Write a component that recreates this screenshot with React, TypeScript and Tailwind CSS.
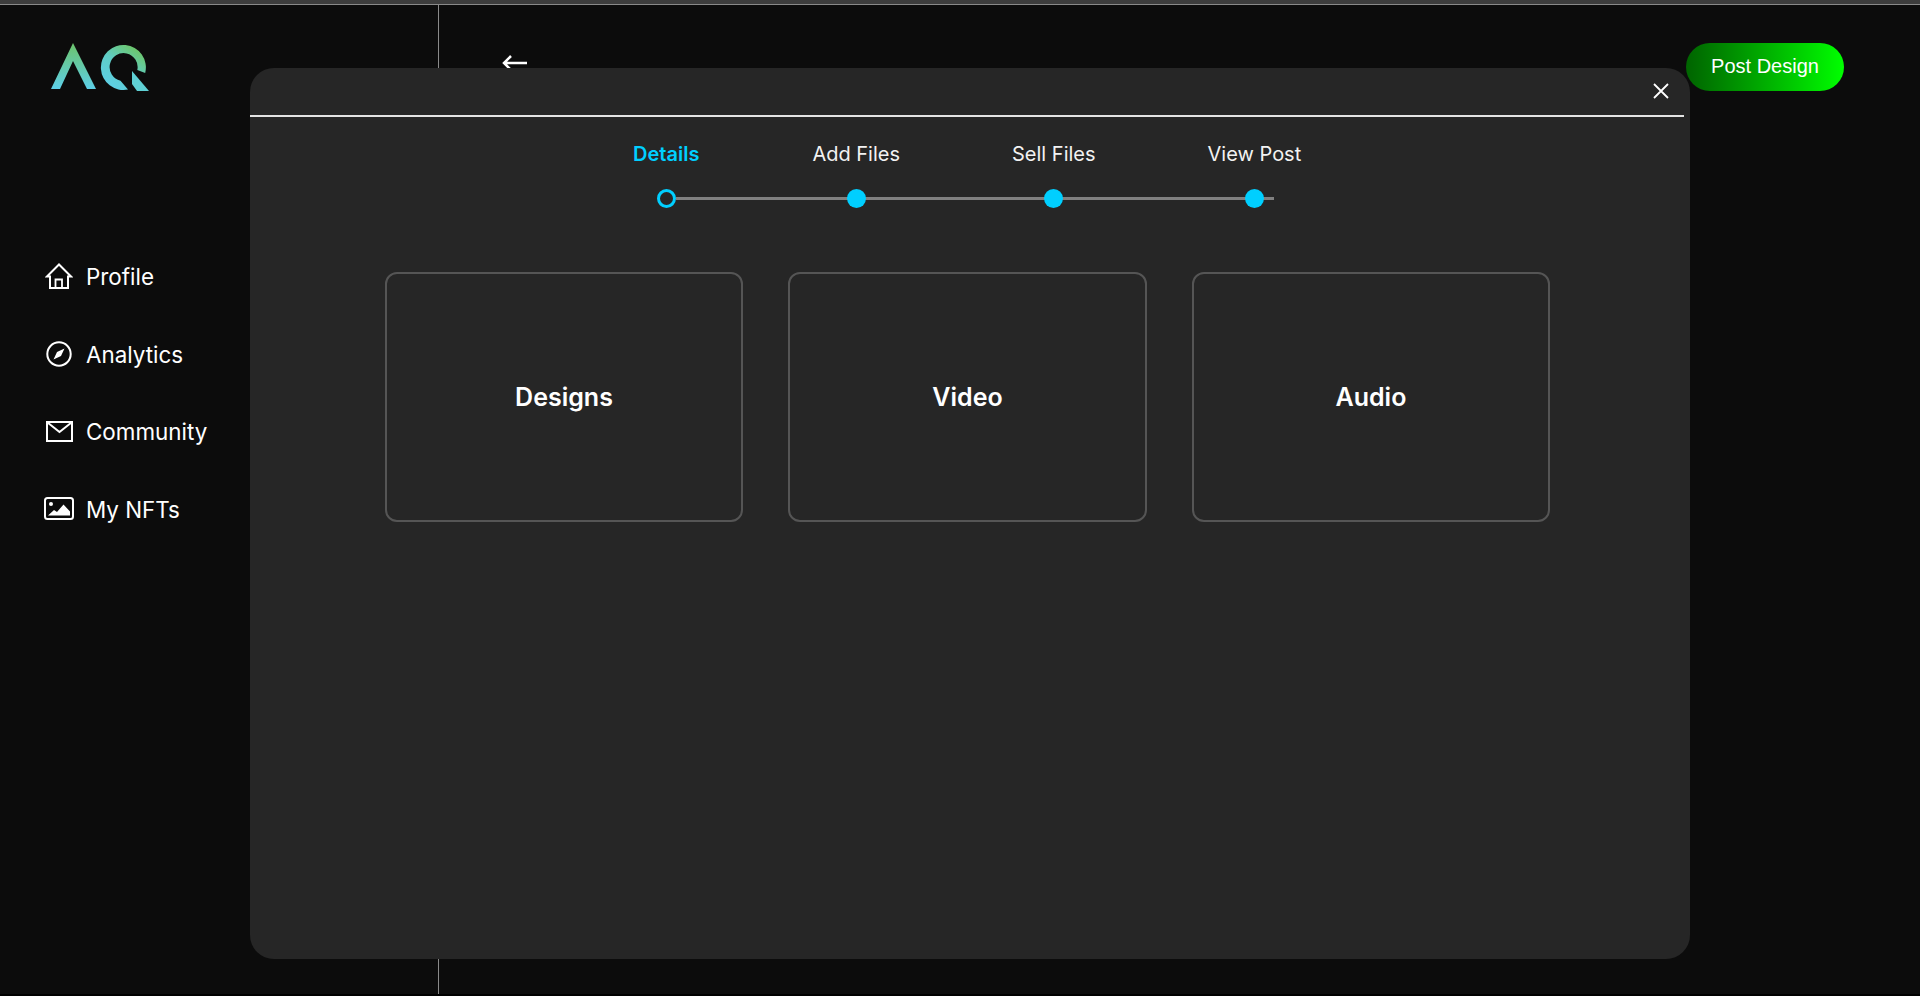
import React from "react";

const Logo = () => (
  <svg width="100" height="50" viewBox="0 0 100 50" className="block">
    <defs>
      <linearGradient id="lg" gradientUnits="userSpaceOnUse" x1="58" y1="46" x2="88" y2="2">
        <stop offset="0" stopColor="#5dcfe8" />
        <stop offset="0.5" stopColor="#5fcdc6" />
        <stop offset="1" stopColor="#6fc458" />
      </linearGradient>
      <linearGradient id="la" x1="0" y1="1" x2="0" y2="0">
        <stop offset="0" stopColor="#5dcfe8" />
        <stop offset="1" stopColor="#6cc36a" />
      </linearGradient>
    </defs>
    <path d="M0 46 L22 0 L45 46 H36 L22 18 L9 46 Z" fill="url(#la)" />
    <path
      d="M94.200 30 A22.500 22.500 0 1 0 77 46.500 L69.500 37.700 A14 14 0 1 1 86.300 27 Z"
      fill="url(#lg)"
    />
    <path d="M81 28 L98 48 H86 L81 41 Z" fill="#5fd0d4" />
  </svg>
);

const Home = () => (
  <svg width="28" height="26" viewBox="0 0 28 26" fill="none" stroke="white" strokeWidth="2" className="block">
    <path d="M2 13.500 L14 1.500 L26 13.500 H23 V25 H5 V13.500 Z" />
    <path d="M10.500 25 V16.500 H17 V25" strokeWidth="1.800" />
  </svg>
);

const Compass = () => (
  <svg width="26" height="26" viewBox="0 0 26 26" className="block">
    <circle cx="13" cy="13" r="11.700" fill="none" stroke="white" strokeWidth="2" />
    <path d="M18.500 7.500 L15 15 L7.500 18.500 L11 11 Z" fill="white" />
  </svg>
);

const Mail = () => (
  <svg width="27" height="21" viewBox="0 0 27 21" fill="none" stroke="white" strokeWidth="2" className="block">
    <rect x="1" y="1" width="25" height="19" />
    <path d="M1.500 1.500 L13.500 11 L25.500 1.500" />
  </svg>
);

const Picture = () => (
  <svg width="30" height="23" viewBox="0 0 30 23" className="block">
    <rect x="1" y="1" width="28" height="21" rx="2.500" fill="none" stroke="white" strokeWidth="2" />
    <circle cx="7" cy="7" r="2" fill="white" />
    <path d="M4 18.500 L10 13 L13 15 L19.500 7.500 L26 14.500 V18.500 Z" fill="white" />
  </svg>
);

const nav = [
  { label: "Profile", icon: <Home /> },
  { label: "Analytics", icon: <Compass /> },
  { label: "Community", icon: <Mail /> },
  { label: "My NFTs", icon: <Picture /> },
];

const steps = ["Details", "Add Files", "Sell Files", "View Post"];
const cards = ["Designs", "Video", "Audio"];

export default function App() {
  return (
    <div className="relative h-[996px] w-[1920px] overflow-hidden bg-black font-['Inter',sans-serif] text-white">
      <div className="h-[5px] border-b border-[#8a8a8a] bg-[#3d3d3d]" />
      <div className="flex h-[989px] bg-[#0c0c0c]">
        <aside className="w-[439px] shrink-0 border-r border-[#8a8a8a] pl-[51px] pt-[38px]">
          <Logo />
          <nav className="mt-[169px] flex flex-col gap-[47.5px]">
            {nav.map((n) => (
              <div key={n.label} className="-ml-[7px] flex h-[30px] items-center">
                <span className="mb-[2px] flex w-[30px] justify-center">{n.icon}</span>
                <span className="ml-[12px] text-[22.4px] leading-[30px] text-white">{n.label}</span>
              </div>
            ))}
          </nav>
        </aside>
        <main className="flex flex-1 items-start justify-between pr-[76px]">
          <svg width="26" height="18" viewBox="0 0 26 18" fill="none" stroke="white" strokeWidth="2.500" className="ml-[63px] mt-[49px] block">
            <path d="M25 9 H2 M9 2 L2 9 L9 16" />
          </svg>
          <button className="mt-[38px] flex h-[48px] w-[158px] items-center justify-center rounded-full bg-gradient-to-r from-[#006400] to-[#00ff00] pb-[2px] font-['Liberation_Sans',sans-serif] text-[20px] text-white">
            Post Design
          </button>
        </main>
      </div>

      <div className="absolute left-[250px] top-[68px] h-[891px] w-[1440px] rounded-[24px] bg-[#262626]">
        <header className="relative h-[49px] w-[1434px] border-b-2 border-[#e4e4e4]">
          <svg width="16" height="16" viewBox="0 0 16 16" fill="none" stroke="white" strokeWidth="1.800" className="absolute right-[15px] top-[15px]">
            <path d="M1 1 L15 15 M15 1 L1 15" />
          </svg>
        </header>
        <div className="relative ml-[383px] mt-[25px] flex w-fit">
          <div className="absolute left-[43px] top-[55px] h-[3px] w-[598px] bg-[#808080]" />
          {steps.map((s, i) => (
            <div key={s} className={`relative flex flex-col items-center ${i === 0 ? "mr-[113px]" : "mr-[112px] last:mr-0"}`}>
              <span className={`whitespace-nowrap text-[20px] leading-[24px] ${i === 0 ? "font-semibold text-[#00cfff]" : "text-[#f2f2f2]"}`}>
                {s}
              </span>
              <span className={`mt-[23px] block h-[19px] w-[19px] rounded-full ${i === 0 ? "border-[3px] border-[#00cfff] bg-[#262626]" : "bg-[#00cfff]"}`} />
            </div>
          ))}
        </div>
        <div className="ml-[134.8px] mt-[64px] flex gap-[45.1px]">
          {cards.map((c) => (
            <div key={c} className="flex h-[250px] w-[358.4px] items-center justify-center rounded-[12px] border-2 border-[#555555] pt-[2px] text-[25px] font-semibold">
              {c}
            </div>
          ))}
        </div>
      </div>
    </div>
  );
}
